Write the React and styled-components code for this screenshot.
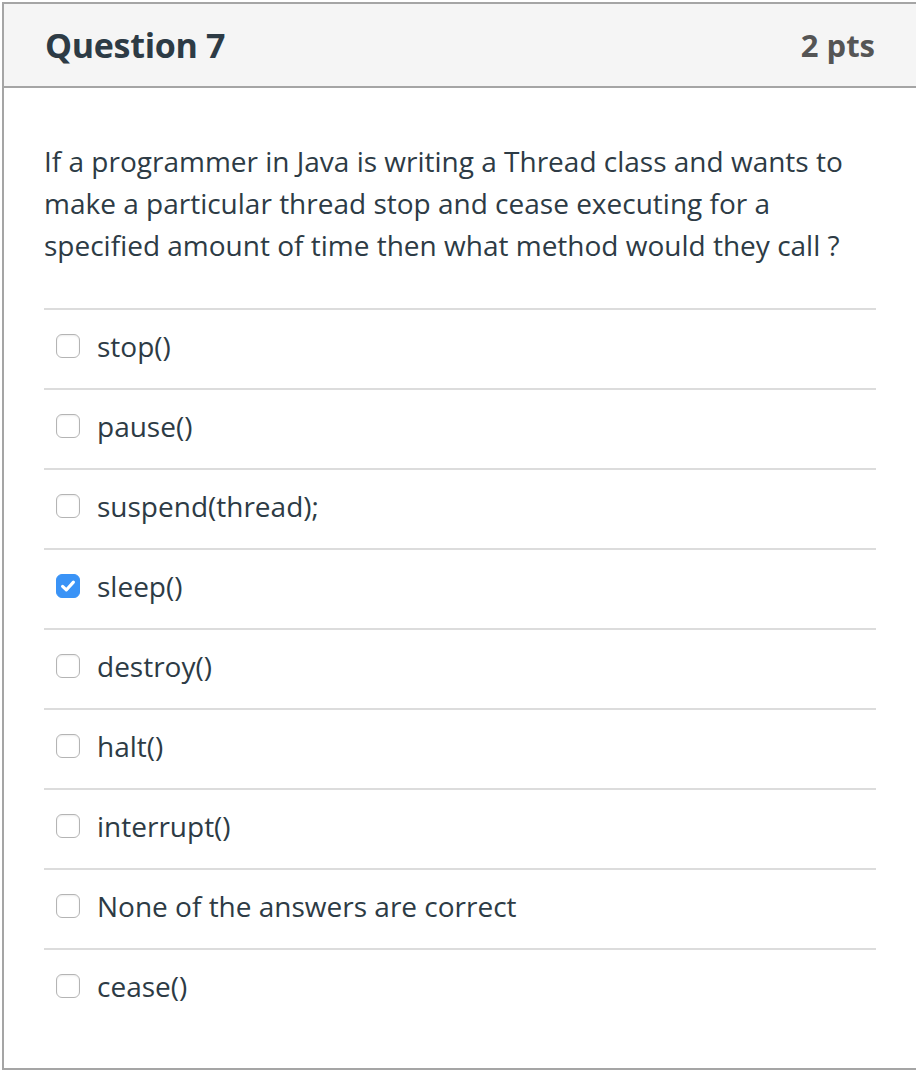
import { styled, createGlobalStyle } from "styled-components";

const options = [
  { id: 1, label: "stop()" },
  { id: 2, label: "pause()" },
  { id: 3, label: "suspend(thread);" },
  { id: 4, label: "sleep()", checked: true },
  { id: 5, label: "destroy()" },
  { id: 6, label: "halt()" },
  { id: 7, label: "interrupt()" },
  { id: 8, label: "None of the answers are correct" },
  { id: 9, label: "cease()" },
];

const GlobalStyle = createGlobalStyle`
  html, body {
    margin: 0;
    padding: 0;
    background: #fff;
    overflow: hidden;
  }
  body {
    font-family: "Open Sans", "Liberation Sans", sans-serif;
    color: #2d3b45;
  }
`;

const CheckBox = ({ checked }) => (
  <Box $checked={checked}>
    {checked && (
      <svg width="18" height="18" viewBox="0 0 16 16" fill="none">
        <path
          d="M3.2 8.4 L6.5 11.5 L12.8 4.6"
          stroke="#fff"
          strokeWidth="2.8"
          strokeLinecap="round"
          strokeLinejoin="round"
        />
      </svg>
    )}
  </Box>
);

const App = () => {
  return (
    <>
      <GlobalStyle />
      <Wrapper>
        <Header>
          <h2 className="title">Question 7</h2>
          <span className="points">2 pts</span>
        </Header>
        <Body>
          <p className="question">
            If a programmer in Java is writing a Thread class and wants to
            make a particular thread stop and cease executing for a
            specified amount of time then what method would they call ?
          </p>
          <ul className="answers">
            {options.map((option) => {
              const { id, label, checked } = option;

              return (
                <Answer key={id}>
                  <CheckBox checked={checked} />
                  <span>{label}</span>
                </Answer>
              );
            })}
          </ul>
        </Body>
      </Wrapper>
    </>
  );
};

const Wrapper = styled.section`
  margin: 2px 0 0 2px;
  width: 918px;
  height: 1068px;
  box-sizing: border-box;
  border: 2px solid #a5a5a5;
  display: flex;
  flex-direction: column;
`;

const Header = styled.header`
  height: 84px;
  box-sizing: border-box;
  background: #f5f5f5;
  border-bottom: 2px solid #a5a5a5;
  display: flex;
  align-items: center;
  justify-content: space-between;
  padding: 0 43px 0 41px;

  .title {
    margin: 0;
    font-size: 34px;
    font-weight: 700;
    color: #2d3b45;
    letter-spacing: -0.3px;
  }

  .points {
    font-size: 31px;
    font-weight: 700;
    color: #555555;
  }
`;

const Body = styled.div`
  padding: 52px 42px 0 40px;

  .question {
    margin: 0 0 42px;
    font-size: 28px;
    line-height: 42px;
    color: #2d3b45;
  }

  .answers {
    list-style: none;
    margin: 0;
    padding: 0;
  }
`;

const Answer = styled.li`
  height: 80px;
  box-sizing: border-box;
  border-top: 2px solid #dcdcdc;
  display: flex;
  align-items: center;
  gap: 17px;
  padding: 0 0 6px 12px;
  font-size: 28px;
  color: #2d3b45;
`;

const Box = styled.span`
  width: 24px;
  height: 24px;
  box-sizing: border-box;
  border-radius: 6px;
  flex-shrink: 0;
  display: inline-flex;
  align-items: center;
  justify-content: center;
  background: ${({ $checked }) => ($checked ? "#3a93f6" : "#fff")};
  border: ${({ $checked }) =>
    $checked ? "1px solid #3a93f6" : "1.5px solid #b4b4b4"};
  box-shadow: ${({ $checked }) =>
    $checked ? "none" : "inset 0 1px 2px rgba(0, 0, 0, 0.08)"};
`;

export default App;
